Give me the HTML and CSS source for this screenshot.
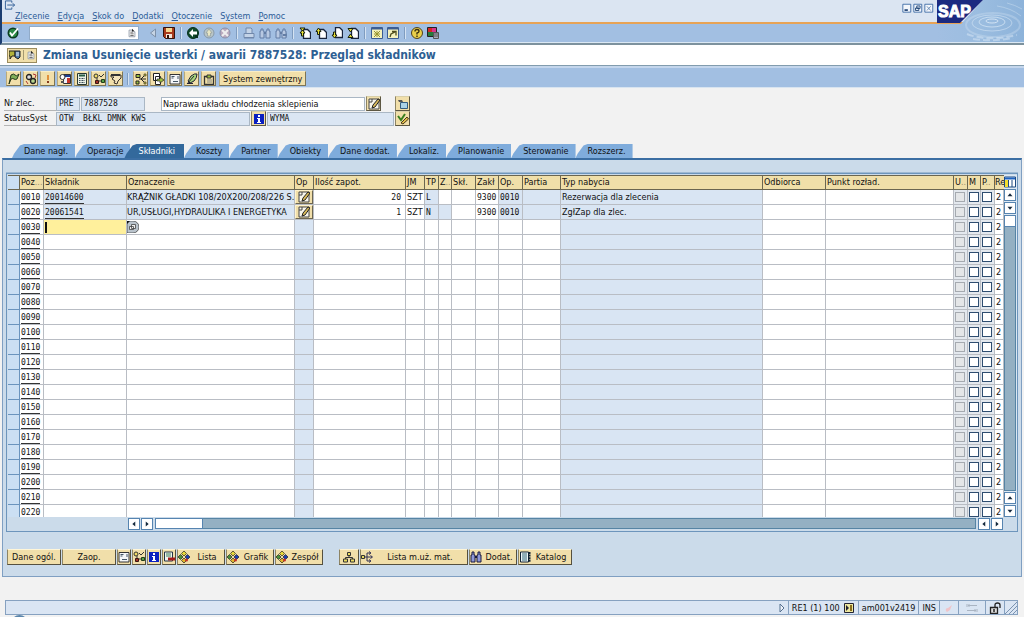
FILE: index.html
```html
<!DOCTYPE html>
<html lang="pl">
<head>
<meta charset="utf-8">
<title>Zmiana Usunięcie usterki / awarii 7887528: Przegląd składników</title>
<link rel="stylesheet" href="styles.css">
</head>
<body>
<svg class="sprite" aria-hidden="true">
  <symbol id="exit" viewBox="0 0 12 12"><path d="M8 3V1H1v9h7V8M3 5.500h8M9 3.500l2 2-2 2" fill="none" stroke="#2c5a94"/></symbol>
  <symbol id="ok" viewBox="0 0 12 12"><circle cx="6" cy="6" r="5.500" fill="#0c3b20"/><circle cx="6" cy="6" r="4" fill="#2b8b45"/><path d="M3 5.500l2 3 6-7" fill="none" stroke="#fff" stroke-width="1.800"/></symbol>
  <symbol id="list" viewBox="0 0 12 12"><path d="M2.500 2.500h4v2h3v6h-7z" fill="#fff" stroke="#8a93a0"/><path d="M4 5h3M4 7h4M4 9h4" stroke="#555"/><path d="M6 1l3 3H6z" fill="#222"/></symbol>
  <symbol id="prev" viewBox="0 0 12 12"><path d="M8.500 2v8l-5-4z" fill="#c6d4e4" stroke="#7d90a8"/></symbol>
  <symbol id="save" viewBox="0 0 12 12"><path d="M.5.500h11v11h-9l-2-2z" fill="#a83a1c" stroke="#32130c"/><path d="M3 1h6v4H3z" fill="#f6d890"/><path d="M3 7h6v4H3z" fill="#f4e5d8"/><path d="M4 8h2v3H4z" fill="#32130c"/></symbol>
  <symbol id="back" viewBox="0 0 12 12"><circle cx="6" cy="6" r="5.500" fill="#0f4a2a" stroke="#08301c"/><path d="M2 6l4-4v2.500h4v3H6V10z" fill="#fff"/><path d="M8 8h3v3H8z" fill="#08301c"/></symbol>
  <symbol id="up" viewBox="0 0 12 12"><circle cx="6" cy="6" r="5" fill="#b9c6c8" stroke="#8798a8"/><path d="M6 2l3 4H7.500v3h-3V6H3z" fill="#e8e6c4" stroke="#8c9694" stroke-width=".6"/></symbol>
  <symbol id="cancel" viewBox="0 0 12 12"><circle cx="6" cy="6" r="5" fill="#b9a9be" stroke="#8990a8"/><path d="M3 3l6 6M9 3L3 9" stroke="#eee" stroke-width="2"/></symbol>
  <symbol id="print" viewBox="0 0 12 12"><path d="M3 6V1h5l1 1v4M1 6.500h10v4H1z" fill="#c3d3e7" stroke="#7088ab"/><path d="M1 11h10" stroke="#7088ab"/></symbol>
  <symbol id="find" viewBox="0 0 12 12"><path d="M2 2h2v2h1v7H1V4h1zM8 2h2v2h1v7H7V4h1z" fill="#b8c9e2" stroke="#637da5"/><path d="M5 6h2" stroke="#637da5" stroke-width="2"/></symbol>
  <symbol id="findnext" viewBox="0 0 12 12"><use href="#find"/><path d="M8 7h3V5l1 3-1 3V9H8z" fill="#637da5"/></symbol>
  <symbol id="first" viewBox="0 0 12 12"><path d="M4.500 2.500h4l3 3v6h-7z" fill="#fff" stroke="#18243c" stroke-width="1.300"/><path d="M1 1h5L3.500 4zM3.500 3L6 6H4.500v3h-2V6H1z" fill="#e8e038" stroke="#17200c"/></symbol>
  <symbol id="pgup" viewBox="0 0 12 12"><path d="M4.500 2.500h4l3 3v6h-7z" fill="#fff" stroke="#18243c" stroke-width="1.300"/><path d="M3.500 1L6 4.500H4.500v3h-2v-3H1z" fill="#e8e038" stroke="#17200c"/></symbol>
  <symbol id="pgdn" viewBox="0 0 12 12"><path d="M4.500.500h4l3 3v7h-7z" fill="#fff" stroke="#18243c" stroke-width="1.300"/><path d="M3.500 11L1 8h1.500V5h2v3H6z" fill="#e8e038" stroke="#17200c"/></symbol>
  <symbol id="last" viewBox="0 0 12 12"><path d="M4.500 1.500h4l3 3v7h-7z" fill="#fff" stroke="#18243c" stroke-width="1.300"/><path d="M1 1.500h5L3.500 5zM1 10.500h5L3.500 7z" fill="#e8e038" stroke="#17200c"/></symbol>
  <symbol id="session" viewBox="0 0 12 12"><path d="M.5.500h11v11H.5z" fill="#f4f1bd" stroke="#3c5c92"/><path d="M1 1.500h10" stroke="#3c5c92" stroke-width="2"/><path d="M3 4l6 6M9 4l-6 6M6 4v6M3 7h6" stroke="#99952d"/></symbol>
  <symbol id="shortcut" viewBox="0 0 12 12"><path d="M.5.500h11v11H.5z" fill="#f4f1bd" stroke="#3c5c92"/><path d="M1 1.500h10" stroke="#3c5c92" stroke-width="2"/><path d="M3 10l1-3 4-2M5 4.500h4v4" fill="none" stroke="#4e4c1c" stroke-width="1.300"/></symbol>
  <symbol id="help" viewBox="0 0 12 12"><circle cx="6" cy="6" r="5.500" fill="#e9cf4a" stroke="#4f4220"/><path d="M4 4.500q0-2 2-2t2 1.700Q8 5.500 6 6v1.500M6 8.500V10" fill="none" stroke="#3a3010" stroke-width="1.400"/></symbol>
  <symbol id="layout" viewBox="0 0 12 12"><path d="M.5.500h9v9h-9z" fill="#277a3c" stroke="#222"/><path d="M1 1h4v4H1z" fill="#d32626"/><path d="M5 1h4v4H5z" fill="#d8328c"/><path d="M6.500 5.500h5v6h-5z" fill="#aab" stroke="#555"/><path d="M7 7h4M7 9h4" stroke="#555"/></symbol>
  <symbol id="order" viewBox="0 0 12 12"><path d="M0 2h6v5H3L1 10V7H0z" fill="#b3b33a" stroke="#222"/><path d="M6 2h5v6l-2 2-3-2z" fill="#4d7aa8" stroke="#222"/><path d="M7 4h3M7 6h3" stroke="#fff"/></symbol>
  <symbol id="flag" viewBox="0 0 12 12"><path d="M1 11L3 2q3-2 4 0t4-1L9 6Q7 7 6 6T3 6z" fill="#7fae58" stroke="#26381c"/></symbol>
  <symbol id="gears" viewBox="0 0 12 12"><circle cx="4" cy="4" r="2.500" fill="#ddd" stroke="#222" stroke-width="1.300"/><circle cx="8" cy="8" r="2.500" fill="#b6d48e" stroke="#222" stroke-width="1.300"/><path d="M8 1l3 1-1 3M1 8l2 3" stroke="#a33" fill="none"/></symbol>
  <symbol id="excl" viewBox="0 0 12 12"><path d="M6 2v5" stroke="#e0913c" stroke-width="2"/><path d="M6 8v2" stroke="#863a1c" stroke-width="2"/></symbol>
  <symbol id="calc" viewBox="0 0 12 12"><path d="M1.500.500h9v11h-9z" fill="#e9efe4" stroke="#283830"/><path d="M3 2.500h6" stroke="#265c42" stroke-width="2"/><path d="M3 5.500h6M3 7.500h6M3 9.500h6" stroke="#394b58" stroke-dasharray="1 .5"/></symbol>
  <symbol id="sched" viewBox="0 0 12 12"><path d="M4.500 1.500h7v9h-7z" fill="#eef2fa" stroke="#333"/><path d="M5 3h6" stroke="#1c3d90" stroke-width="2"/><path d="M8 5h3v5H8z" fill="#c73529"/><circle cx="3.500" cy="4" r="2.500" fill="#fff" stroke="#333"/><path d="M2 8h3v2H2z" fill="#555"/></symbol>
  <symbol id="net" viewBox="0 0 12 12"><circle cx="3" cy="3" r="2" fill="#f0db65" stroke="#333"/><path d="M6 2l2 2 3-3" fill="none" stroke="#333"/><path d="M2.500 7.500h3v3h-3z" fill="#a33129" stroke="#3a1612"/><path d="M8.500 6.500h3v3h-3z" fill="#58a247" stroke="#203d18"/><path d="M4 5v2M6 8h2" stroke="#333"/></symbol>
  <symbol id="hand" viewBox="0 0 12 12"><path d="M1 2h10v3L8 8l-1 3-3-1 1-2-3-2 2-2H1z" fill="#f4e4bd" stroke="#37302a"/><path d="M1 2h9" stroke="#333" stroke-width="2"/></symbol>
  <symbol id="split" viewBox="0 0 12 12"><path d="M1 1.500h4v3H1zM1 8h3v3H1z" fill="#9cbf3e" stroke="#222"/><path d="M4 6h7M6 6l4-4M6 6l4 4" stroke="#222"/><path d="M9 1h2v2H9zM9 9h2v2H9z" fill="#d8cf3a" stroke="#222" stroke-width=".6"/></symbol>
  <symbol id="copy" viewBox="0 0 12 12"><path d="M1.500.500h6v7h-6zM3.500 3.500h5v8h-5z" fill="#fff" stroke="#222"/><path d="M5 6h3V4l4 3-4 3V8H5z" fill="#9cbf3e" stroke="#222" stroke-width=".7"/></symbol>
  <symbol id="doc" viewBox="0 0 12 12"><path d="M1 1.500h10v9.500H1z" fill="#f4f6f8" stroke="#333"/><path d="M2.500 3.500h3M2.500 5h2M4 8.500h5M9 3v3" stroke="#456"/></symbol>
  <symbol id="pen" viewBox="0 0 12 12"><path d="M2 8l3-5q4-3 6-2Q11 5 8 8l-4 2z" fill="#a9d77b" stroke="#223"/><path d="M1 11l7-8" stroke="#223"/><path d="M1 10.500h6" stroke="#223"/></symbol>
  <symbol id="clip" viewBox="0 0 12 12"><path d="M1.500 3.500h9v8h-9z" fill="#f2e1a5" stroke="#333" stroke-width="1.300"/><path d="M4 2h4v3H4z" fill="#9cbf3e" stroke="#333"/><path d="M4 7h5M4 9h5" stroke="#888"/></symbol>
  <symbol id="edit" viewBox="0 0 12 12"><path d="M1 1h10v10H1z" fill="#f8f6ec" stroke="#444"/><path d="M1 4h3V1" stroke="#444" fill="none"/><path d="M4 10l1-3 5-6 2 1-5 7z" fill="#d8b95a" stroke="#222"/></symbol>
  <symbol id="info" viewBox="0 0 12 12"><path d="M1 1h10v10H1z" fill="#0b20c0"/><path d="M5 2h2v2H5zM4 5h3v4h1v1H4V9h1V6H4z" fill="#fff"/></symbol>
  <symbol id="obj" viewBox="0 0 12 12"><path d="M3.500 4.500h7v6h-7z" fill="#a9d1e8" stroke="#335c80"/><path d="M1 2h4l1 2H2z" fill="#555"/></symbol>
  <symbol id="status" viewBox="0 0 12 12"><path d="M1 3l3 4 4-6" fill="none" stroke="#397f1f" stroke-width="2"/><path d="M4 10l6-6 1.500 2L6 11z" fill="#e4bf4c" stroke="#47381a"/></symbol>
  <symbol id="del" viewBox="0 0 12 12"><path d="M1.500 1h8v9h-8z" fill="#eef4f0" stroke="#234"/><path d="M3 3h5M3 5h5" stroke="#3e7f57"/><path d="M5 8h7" stroke="#a41a1a" stroke-width="3"/></symbol>
  <symbol id="balls" viewBox="0 0 12 12"><path d="M6 0l2.500 2.500L6 5 3.500 2.500z" fill="#e8d838" stroke="#222" stroke-width=".7"/><path d="M2.500 3.500L5 6 2.500 8.500 0 6z" fill="#4a8e3b" stroke="#222" stroke-width=".7"/><path d="M9.500 3.500L12 6 9.500 8.500 7 6z" fill="#1c3daf" stroke="#222" stroke-width=".7"/><path d="M6 7l2.500 2.500L6 12 3.500 9.500z" fill="#e0b62c" stroke="#222" stroke-width=".7"/><circle cx="8.500" cy="9" r="1.500" fill="#c43225"/></symbol>
  <symbol id="tree" viewBox="0 0 12 12"><path d="M6 4v3M2.500 8V6.500h7V8" fill="none" stroke="#333"/><path d="M4.500 1.500h3v3h-3zM.5 8h4v3h-4zM7.500 8h4v3h-4z" fill="#eadb60" stroke="#333"/></symbol>
  <symbol id="used" viewBox="0 0 12 12"><path d="M.5 4.500h3v3h-3z" fill="#eadb60" stroke="#333"/><path d="M4 6h7M6 6V2h3M6 6v4h3M8 .5l2 1.500-2 1.500M8 8.500l2 1.500-2 1.500M9.500 4.500l2 1.500-2 1.500" fill="none" stroke="#335"/></symbol>
  <symbol id="binoc" viewBox="0 0 12 12"><path d="M2 1h2v3h1v7H1V4h1zM8 1h2v3h1v7H7V4h1z" fill="#8e97d8" stroke="#1b1b3c"/><path d="M5 6h2" stroke="#1b1b3c" stroke-width="2"/></symbol>
  <symbol id="book" viewBox="0 0 12 12"><path d="M1.500 1h8v10h-8z" fill="#eef6f8" stroke="#123"/><path d="M3 3h5M3 5h5M3 7h5M3 9h5" stroke="#367"/><path d="M10.500 1v10" stroke="#123" stroke-width="2" stroke-dasharray="2 .6"/></symbol>
  <symbol id="config" viewBox="0 0 12 12"><path d="M.5 1h11v10H.5z" fill="#fff" stroke="#1c4a80"/><path d="M1 2.500h10" stroke="#1e63c0" stroke-width="2"/><path d="M1 4h3v7H1z" fill="#f2dc2e"/><path d="M4.500 4v7M8 4v7" stroke="#1c4a80"/></symbol>
  <symbol id="f4" viewBox="0 0 12 12"><path d="M0 0h6a6 6 0 010 12H0z" fill="#b9c3cc" stroke="#333" stroke-width=".7"/><path d="M0 0h3L0 3z" fill="#111"/><path d="M4.500 3.500h4v4h-4zM2.500 5.500h4v3h-4z" fill="#eee" stroke="#444" stroke-width=".8"/></symbol>
  <symbol id="al" viewBox="0 0 12 12"><path d="M7.500 3v6L4 6z" fill="#14283c"/></symbol>
  <symbol id="ar" viewBox="0 0 12 12"><path d="M4.500 3v6L8 6z" fill="#14283c"/></symbol>
  <symbol id="au" viewBox="0 0 12 12"><path d="M3 7.500h6L6 4z" fill="#14283c"/></symbol>
  <symbol id="ad" viewBox="0 0 12 12"><path d="M3 4.500h6L6 8z" fill="#14283c"/></symbol>
  <symbol id="tri" viewBox="0 0 12 12"><path d="M4 2v8l4-4z" fill="#eef3fa" stroke="#55708f"/></symbol>
  <symbol id="sys" viewBox="0 0 12 12"><path d="M1.500 1.500h9v9h-9z" fill="#eee8a0" stroke="#223"/><path d="M3 3l3 3-3 3z" fill="#223"/><path d="M8 3v6" stroke="#8a6f1c" stroke-width="2"/></symbol>
  <symbol id="redpen" viewBox="0 0 12 12"><path d="M3 9q-1-3 2-3l4-3-2 5-3 2z" fill="#f0c4c8"/></symbol>
  <symbol id="swap" viewBox="0 0 12 12"><path d="M1 2v3M2 3.500h9M3 2v3M11 7v3M10 8.500H1M9 7v3" fill="none" stroke="#a9b4c2"/></symbol>
  <symbol id="lock" viewBox="0 0 12 12"><path d="M1.500 5.500h7v6h-7z" fill="#ddd" stroke="#222" stroke-width="1.300"/><path d="M6 5V3q0-2 2.500-2T11 3v3" fill="none" stroke="#222" stroke-width="1.300"/><path d="M5 7v3" stroke="#222" stroke-width="1.500"/></symbol>
  <symbol id="grip" viewBox="0 0 12 12"><path d="M0 12L12 0M4 12l8-8M8 12l4-4" stroke="#7b93b0"/></symbol>
  <symbol id="min" viewBox="0 0 12 12"><path d="M1 1.500h9.500V11H1z" fill="#f2f6fb" stroke="#31629f"/><path d="M3 8.500h4" stroke="#173c70" stroke-width="2"/></symbol>
  <symbol id="max" viewBox="0 0 12 12"><path d="M1 1.500h9.500V11H1z" fill="#f2f6fb" stroke="#31629f"/><path d="M4.500 3.500h4v3h-4zM3 6h4v3H3z" fill="#dce8f4" stroke="#173c70"/></symbol>
  <symbol id="close" viewBox="0 0 12 12"><path d="M1 1.500h9.500V11H1z" fill="#f2f6fb" stroke="#31629f"/><path d="M3.500 4l4.500 5M8 4L3.500 9" stroke="#5b7fae"/></symbol>
</svg>

<header class="top">
  <div class="menu-area">
    <button class="bare session-menu" aria-label="Menu okna"><svg class="ico"><use href="#exit"/></svg></button>
    <nav class="menu">
      <a href="#"><u>Z</u>lecenie</a><a href="#"><u>E</u>dycja</a><a href="#"><u>S</u>kok do</a><a href="#"><u>D</u>odatki</a><a href="#"><u>O</u>toczenie</a><a href="#">S<u>y</u>stem</a><a href="#"><u>P</u>omoc</a>
    </nav>
  </div>
  <div class="toolbar">
    <button class="bare" aria-label="Enter"><svg class="ico"><use href="#ok"/></svg></button>
    <div class="command"><input aria-label="Polecenie"><button class="bare" aria-label="Lista poleceń"><svg class="ico small"><use href="#list"/></svg></button></div>
    <button class="bare" aria-label="Zwiń"><svg class="ico"><use href="#prev"/></svg></button>
    <button class="bare" aria-label="Zapisz"><svg class="ico"><use href="#save"/></svg></button>
    <i class="sep"></i>
    <button class="bare" aria-label="Wstecz"><svg class="ico"><use href="#back"/></svg></button>
    <button class="bare" aria-label="Zakończ"><svg class="ico"><use href="#up"/></svg></button>
    <button class="bare" aria-label="Przerwij"><svg class="ico"><use href="#cancel"/></svg></button>
    <i class="sep"></i>
    <button class="bare" aria-label="Drukuj"><svg class="ico"><use href="#print"/></svg></button>
    <button class="bare" aria-label="Znajdź"><svg class="ico"><use href="#find"/></svg></button>
    <button class="bare" aria-label="Znajdź dalej"><svg class="ico"><use href="#findnext"/></svg></button>
    <i class="sep"></i>
    <button class="bare" aria-label="Pierwsza strona"><svg class="ico"><use href="#first"/></svg></button>
    <button class="bare" aria-label="Poprzednia strona"><svg class="ico"><use href="#pgup"/></svg></button>
    <button class="bare" aria-label="Następna strona"><svg class="ico"><use href="#pgdn"/></svg></button>
    <button class="bare" aria-label="Ostatnia strona"><svg class="ico"><use href="#last"/></svg></button>
    <i class="sep"></i>
    <button class="bare" aria-label="Nowy tryb"><svg class="ico"><use href="#session"/></svg></button>
    <button class="bare" aria-label="Skrót"><svg class="ico"><use href="#shortcut"/></svg></button>
    <i class="sep"></i>
    <button class="bare" aria-label="Pomoc"><svg class="ico"><use href="#help"/></svg></button>
    <button class="bare" aria-label="Układ"><svg class="ico"><use href="#layout"/></svg></button>
  </div>
  <div class="window-buttons">
    <button class="bare" aria-label="Minimalizuj"><svg class="ico small"><use href="#min"/></svg></button>
    <button class="bare" aria-label="Maksymalizuj"><svg class="ico small"><use href="#max"/></svg></button>
    <button class="bare" aria-label="Zamknij"><svg class="ico small"><use href="#close"/></svg></button>
  </div>
  <svg class="brand" viewBox="0 0 87 42" role="img" aria-label="SAP">
    <defs><linearGradient id="water" x1="0" x2="1"><stop offset="0" stop-color="#a2bfe2"/><stop offset=".5" stop-color="#9bbde0"/><stop offset="1" stop-color="#8db3da"/></linearGradient></defs>
    <path d="M0 24h24L46 0h41v42H0z" fill="url(#water)"/>
    <g fill="none" stroke="#d9e8f6"><ellipse cx="55" cy="21" rx="6" ry="2" opacity=".9"/><ellipse cx="55" cy="22" rx="13" ry="5" opacity=".7"/><ellipse cx="55" cy="23" rx="20" ry="8" opacity=".55"/><ellipse cx="56" cy="25" rx="27" ry="12" opacity=".3" stroke-width="2"/><path d="M30 34q20 8 50 1M36 39q20 3 40-1" opacity=".5" stroke-width="2" stroke-dasharray="7 3"/><path d="M60 6q14 2 24 10M70 3q8 2 15 6" opacity=".4"/></g>
    <path d="M0 0h46L23 23H0z" fill="#1c2a80"/>
    <text x="1" y="17" class="brand-text">SAP</text>
  </svg>
</header>

<div class="title-bar">
  <button class="key title-button" aria-label="Usługi dla obiektu"><svg class="ico"><use href="#order"/></svg><i></i><svg class="ico small"><use href="#list"/></svg></button>
  <h1>Zmiana Usunięcie usterki / awarii 7887528: Przegląd składników</h1>
</div>
<div class="app-bar">
  <button class="key" aria-label="Zwolnij"><svg class="ico"><use href="#flag"/></svg></button>
  <button class="key" aria-label="Ustawienia"><svg class="ico"><use href="#gears"/></svg></button>
  <button class="key" aria-label="Uwaga"><svg class="ico"><use href="#excl"/></svg></button>
  <button class="key" aria-label="Terminowanie"><svg class="ico"><use href="#sched"/></svg></button>
  <button class="key" aria-label="Kalkulacja"><svg class="ico"><use href="#calc"/></svg></button>
  <button class="key" aria-label="Dostępność"><svg class="ico"><use href="#net"/></svg></button>
  <button class="key" aria-label="Przekaż"><svg class="ico"><use href="#hand"/></svg></button>
  <i class="sep"></i>
  <button class="key" aria-label="Struktura"><svg class="ico"><use href="#split"/></svg></button>
  <button class="key" aria-label="Przenieś"><svg class="ico"><use href="#copy"/></svg></button>
  <button class="key" aria-label="Dokument"><svg class="ico"><use href="#doc"/></svg></button>
  <button class="key" aria-label="Podpis"><svg class="ico"><use href="#pen"/></svg></button>
  <button class="key" aria-label="Schowek"><svg class="ico"><use href="#clip"/></svg></button>
  <button class="key text-key">System zewnętrzny</button>
</div>

<main>
  <section class="fields">
    <div class="field-row">
      <label for="order-no">Nr zlec.</label>
      <input class="mono type" aria-label="Rodzaj zlecenia" value="PRE" readonly>
      <input class="mono number" id="order-no" value="7887528" readonly>
      <input class="description" aria-label="Opis" value="Naprawa układu chłodzenia sklepienia">
      <button class="key" aria-label="Tekst długi"><svg class="ico"><use href="#edit"/></svg></button>
      <button class="key end-key" aria-label="Obiekt"><svg class="ico"><use href="#obj"/></svg></button>
    </div>
    <div class="field-row">
      <label for="sys-status">StatusSyst</label>
      <input class="mono status" id="sys-status" value="OTW  BŁKL DMNK KWS" readonly>
      <button class="key" aria-label="Informacja"><svg class="ico"><use href="#info"/></svg></button>
      <input class="mono user-status" aria-label="Status użytkownika" value="WYMA" readonly>
      <button class="key" aria-label="Zmień status"><svg class="ico"><use href="#status"/></svg></button>
    </div>
  </section>

  <div class="tabs" role="tablist">
    <button role="tab">Dane nagł.</button><button role="tab">Operacje</button><button role="tab" class="active" aria-selected="true">Składniki</button><button role="tab">Koszty</button><button role="tab">Partner</button><button role="tab">Obiekty</button><button role="tab">Dane dodat.</button><button role="tab">Lokaliz.</button><button role="tab">Planowanie</button><button role="tab">Sterowanie</button><button role="tab">Rozszerz.</button>
  </div>

  <section class="panel">
    <div class="grid-box">
      <div class="grid-main">
        <div class="table-clip">
          <table>
            <colgroup>
              <col class="w12"><col class="w24"><col class="w83"><col class="w168"><col class="w19"><col class="w92"><col class="w19"><col class="w14"><col class="w13"><col class="w24"><col class="w23"><col class="w24"><col class="w38"><col><col class="w63"><col class="w128"><col class="w14"><col class="w13"><col class="w14"><col class="w9">
            </colgroup>
            <thead><tr><th class="sel"></th><th>Poz<span class="faint">...</span></th><th>Składnik</th><th>Oznaczenie</th><th>Op</th><th>Ilość zapot.</th><th>JM</th><th>TP</th><th>Z<span class="faint">...</span></th><th>Skł.</th><th>Zakł</th><th>Op.</th><th>Partia</th><th>Typ nabycia</th><th>Odbiorca</th><th>Punkt rozład.</th><th>U<span class="faint">..</span></th><th>M</th><th>P<span class="faint">..</span></th><th class="tight">Re</th></tr></thead>
            <tbody id="rows"></tbody>
          </table>
        </div>
        <div class="vscroll">
          <button class="config" aria-label="Konfiguracja tabeli"><svg class="ico"><use href="#config"/></svg></button>
          <button class="arrow" aria-label="Do góry"><svg class="ico small"><use href="#au"/></svg></button>
          <button class="arrow" aria-label="W dół"><svg class="ico small"><use href="#ad"/></svg></button>
          <div class="track"><div class="thumb"></div></div>
          <button class="arrow" aria-label="Wiersz w górę"><svg class="ico small"><use href="#au"/></svg></button>
          <button class="arrow" aria-label="Wiersz w dół"><svg class="ico small"><use href="#ad"/></svg></button>
        </div>
      </div>
      <div class="hscroll">
        <button class="arrow" aria-label="W lewo"><svg class="ico small"><use href="#al"/></svg></button>
        <button class="arrow" aria-label="W prawo"><svg class="ico small"><use href="#ar"/></svg></button>
        <div class="track"><div class="thumb"></div></div>
        <button class="arrow" aria-label="Kolumna w lewo"><svg class="ico small"><use href="#al"/></svg></button>
        <button class="arrow" aria-label="Kolumna w prawo"><svg class="ico small"><use href="#ar"/></svg></button>
      </div>
    </div>
    <div class="actions">
      <button class="key b54">Dane ogól.</button>
      <button class="key b54">Zaop.</button>
      <button class="key" aria-label="Szczegóły"><svg class="ico"><use href="#doc"/></svg></button>
      <button class="key" aria-label="Dostępność składników"><svg class="ico"><use href="#net"/></svg></button>
      <button class="key" aria-label="Informacja o składniku"><svg class="ico"><use href="#info"/></svg></button>
      <button class="key" aria-label="Usuń wiersz"><svg class="ico"><use href="#del"/></svg></button>
      <button class="key b48"><svg class="ico"><use href="#balls"/></svg><span>Lista</span></button>
      <button class="key b48"><svg class="ico"><use href="#balls"/></svg><span>Grafik</span></button>
      <button class="key b48"><svg class="ico"><use href="#balls"/></svg><span>Zespół</span></button>
      <button class="key b20" aria-label="Struktura"><svg class="ico"><use href="#tree"/></svg></button>
      <button class="key b108"><svg class="ico"><use href="#used"/></svg><span>Lista m.uż. mat.</span></button>
      <button class="key b48"><svg class="ico"><use href="#binoc"/></svg><span>Dodat.</span></button>
      <button class="key b54"><svg class="ico"><use href="#book"/></svg><span>Katalog</span></button>
    </div>
  </section>
</main>

<footer class="status-bar">
  <svg class="ico"><use href="#tri"/></svg>
  <span class="cell">RE1 (1) 100 <svg class="ico"><use href="#sys"/></svg></span>
  <span class="cell">am001v2419</span>
  <span class="cell">INS</span>
  <span class="cell"><svg class="ico"><use href="#redpen"/></svg></span>
  <span class="cell wide"><svg class="ico"><use href="#swap"/></svg></span>
  <span class="cell"><svg class="ico"><use href="#lock"/></svg></span>
  <span class="cell grip"><svg class="ico"><use href="#grip"/></svg></span>
</footer>
<div class="orb-clip"><i class="orb"></i></div>
<script src="rows.js"></script>
</body>
</html>
```
FILE: styles.css
```css
* { box-sizing: border-box; }
body {
  margin: 0;
  min-height: 100vh;
  display: flex;
  flex-direction: column;
  background: #f2f2f2;
  color: #111;
  font-family: "DejaVu Sans Condensed", "DejaVu Sans", sans-serif;
  font-size: 9px;
  line-height: 12px;
  overflow: hidden;
}
button, input { font: inherit; color: inherit; margin: 0; padding: 0; border-radius: 0; }
button { white-space: nowrap; }
input { min-width: 0; outline: none; }
.sprite { position: absolute; width: 0; height: 0; }
.ico { width: 12px; height: 12px; display: block; flex: none; }
.ico.small { width: 10px; height: 10px; }
.bare { border: 0; background: none; display: block; }
.mono, .m { font-family: "DejaVu Sans Mono", monospace; font-size: 8px; }

.top { position: relative; border-left: 2px solid #1b3d70; border-bottom: 2px solid #7d929e; background: #a2bfe2; }
.menu-area { height: 24px; padding-left: 2px; background: #dbe5f2; border-bottom: 2px solid #e8a355; }
.menu { display: flex; gap: 8px; padding-left: 11px; margin-top: -1px; }
.menu a { color: #2b5c98; text-decoration: none; }
.menu u { text-decoration: underline; text-underline-offset: 1px; }
.session-menu .ico { height: 11px; }
.toolbar { height: 19px; display: flex; align-items: center; gap: 4px; padding-left: 5px; border-bottom: 1px solid #dbe8f4; }
.command { display: flex; align-items: center; width: 110px; height: 14px; margin: 0 4px 0 6px; padding-right: 1px; background: #fff; border: 1px solid #91abc8; }
.command input { flex: 1; border: 0; background: none; }
.sep { flex: none; width: 2px; height: 12px; border-left: 1px solid #7f9cbf; border-right: 1px solid #d5e3f2; }
.toolbar .sep { margin: 0 1px; }
.window-buttons { position: absolute; top: 3px; right: 90px; display: flex; gap: 1px; }
.brand { position: absolute; top: 0; right: 0; width: 87px; height: 42px; }
.brand-text { font: bold 16px "Liberation Sans", Arial, sans-serif; fill: #fff; stroke: #fff; stroke-width: 1px; }

.title-bar { height: 21px; display: flex; align-items: center; gap: 6px; padding-left: 7px; background: #fff; border-bottom: 1px solid #829cae; }
h1 { margin: 0; font-size: 12px; line-height: 16px; font-weight: bold; color: #2e6093; white-space: nowrap; }
.key {
  flex: none; display: flex; align-items: center; justify-content: center;
  min-width: 15px; height: 15px; background: #f1dfaa;
  border: 1px solid #fff3cd; border-right-color: #6d6650; border-bottom-color: #6d6650;
}
.key span { flex: 1; text-align: center; }
.title-button { width: 30px; gap: 2px; border: 1px solid #9b8c5e; }
.title-button i { width: 1px; height: 10px; background: #a59970; }
.app-bar { height: 22px; display: flex; align-items: center; gap: 2px; padding: 2px 0 0 6px; background: #a2bfe2; border-top: 2px solid #c4d6ec; border-bottom: 1px solid #d8e4f0; }
.app-bar .key { border-color: #f9edc6 #7d7454 #7d7454 #b8aa7c; }
.app-bar .sep { margin: 0 2px; }
.app-bar .text-key { padding: 0 3px; margin-left: 1px; }

.fields { padding: 8px 4px 0; }
.field-row { display: flex; align-items: center; height: 15px; }
.field-row label { width: 52px; line-height: 13px; border-bottom: 1px solid #b5b5b5; }
.field-row input { height: 14px; padding: 0 2px; border: 1px solid #aab7c4; background: #dbe6f3; margin-right: 1px; }
.field-row .type { width: 24px; }
.field-row .number { width: 64px; }
.field-row .description { width: 204px; margin-left: 15px; padding: 0 1px; background: #fff; }
.field-row .end-key { margin-left: 14px; }
.field-row .status { width: 194px; }
.field-row .user-status { width: 127px; margin-left: 1px; }
.field-row .key { border-color: #d9cfa8 #5d5742 #5d5742 #8d8464; }

.tabs { display: flex; height: 14px; margin-top: 18px; padding-left: 12px; }
.tabs button { border: 0; height: 14px; padding: 0 7px 0 12px; background: #7facdc; clip-path: polygon(0 100%, 2px 70%, 8px 10%, 12px 0, 100% 0, 100% 100%); }
.tabs .active { background: #33699c; color: #fff; margin-left: -6px; padding-left: 14px; padding-right: 9px; }
.panel { margin: 0 2px; padding: 13px 3px 11px; background: #cbdbea; border: 1px solid #7f9fc2; border-top: 2px solid #3b6ea3; }

.grid-box { padding: 1px 0 1px 1px; border: 1px solid #6d95bc; box-shadow: 0 -1px #9fb9d2; }
.grid-main { display: flex; height: 342px; }
.table-clip { flex: 1; min-width: 0; overflow: hidden; }
table { width: 100%; table-layout: fixed; border-collapse: separate; border-spacing: 0; }
.w9 { width: 9px; } .w12 { width: 12px; } .w13 { width: 13px; } .w14 { width: 14px; } .w19 { width: 19px; }
.w23 { width: 23px; } .w24 { width: 24px; } .w38 { width: 38px; } .w63 { width: 63px; } .w83 { width: 83px; }
.w92 { width: 92px; } .w128 { width: 128px; } .w168 { width: 168px; }
th, td { height: 15px; padding: 0 0 0 1px; overflow: hidden; white-space: nowrap; text-align: left; line-height: 13px; }
th { font-weight: normal; background: #f0dfa9; border: 1px solid #6b6650; border-left: 0; }
th .faint { color: #9b9070; }
th.tight { padding: 0; border-right: 0; }
td { background: #fff; border-right: 1px solid #b9bdc4; border-bottom: 1px solid #b9bdc4; }
th.sel { background: #cbdff3; }
td.sel { background: #cbdff3; border-color: #6b94bd; }
td.blue { background: #d9e5f3; }
td.name { padding: 0; }
td.boxed { background: #e3e8ee; padding: 0; }
td.focus { background: #fff09c; }
td a { color: #111; border-bottom: 1px solid #333; text-decoration: none; display: inline-block; line-height: 10px; }
td.hit { padding: 0; }
td .key { width: 18px; height: 14px; }
td input:not([type=checkbox]) { display: block; width: 100%; height: 13px; border: 0; background: none; }
td .right { text-align: right; padding-right: 4px; }
td.focus input { border-left: 2px solid #111; height: 11px; }
input[type=checkbox] { appearance: none; display: block; width: 10px; height: 10px; margin: 1px; background: #fff; border: 1px solid #2e4d70; }
input[type=checkbox]:disabled { background: #e4e6e8; border-color: #a5aab0; }

.vscroll { width: 13px; display: flex; flex-direction: column; gap: 1px; background: #dce8f3; }
.config { width: 13px; height: 13px; border: 0; background: none; }
.arrow { flex: none; display: flex; align-items: center; justify-content: center; width: 12px; height: 12px; background: #fff; border: 1px solid #5684b0; }
.track { flex: 1; background: #94b0c3; border: 1px solid #5684a4; }
.vscroll .track { width: 12px; }
.thumb { background: #fff; border: 1px solid #5684b0; }
.vscroll .thumb { height: 12px; margin: -1px; }
.hscroll { display: flex; align-items: center; gap: 1px; height: 13px; padding: 0 14px 0 120px; }
.hscroll .track { height: 11px; margin: 0 1px; }
.hscroll .thumb { width: 48px; height: 11px; margin: -1px; }
.actions { display: flex; gap: 1px; padding: 17px 0 0 1px; }
.actions .key { border-color: #fff6d8 #55503f #55503f #8d8464; height: 16px; min-width: 14px; }
.actions .b20 { width: 20px; margin-left: 15px; }
.actions .b48 { width: 48px; }
.actions .b54 { width: 54px; }
.actions .b108 { width: 108px; }

.status-bar { display: flex; align-items: center; justify-content: flex-end; height: 15px; margin: 23px 6px 0 5px; background: #dae5f3; border: 1px solid #86a1c0; }
.cell { display: flex; align-items: center; gap: 3px; height: 13px; padding: 0 3px; border-left: 1px solid #86a1c0; }
.cell.wide { padding: 0 7px; }
.cell.grip { padding: 0; }
.orb-clip { height: 2px; margin-left: 11px; overflow: hidden; }
.orb { display: block; width: 17px; height: 17px; border: 2px solid #5b86ac; border-radius: 50%; }
```
FILE: rows.js
```javascript
const items = [
  { part: "20014600", name: "KRĄŻNIK GŁADKI 108/20X200/208/226 S..", qty: "20", unit: "SZT", tp: "L", plant: "9300", op: "0010", type: "Rezerwacja dla zlecenia" },
  { part: "20061541", name: "UR,USŁUGI,HYDRAULIKA I ENERGETYKA", qty: "1", unit: "SZT", tp: "N", plant: "9300", op: "0010", type: "ZgłZap dla zlec." }
];
const cell = (html = "", cls = "") => `<td class="${cls}">${html}</td>`;
const check = (label, off) => cell(`<input type="checkbox" aria-label="${label}"${off ? " disabled" : ""}>`, "boxed");

let html = "";
for (let i = 0; i < 22; i++) {
  const pos = String((i + 1) * 10).padStart(4, "0");
  const d = items[i];
  html += "<tr>" + cell("", "sel") + cell(`<a href="#">${pos}</a>`, "m");
  if (d) {
    html += cell(`<a href="#">${d.part}</a>`, "m blue")
      + cell(d.name, "blue name")
      + cell('<button class="key" aria-label="Tekst"><svg class="ico"><use href="#edit"/></svg></button>', "hit")
      + cell(`<input class="right m" aria-label="Ilość ${pos}" value="${d.qty}">`)
      + cell(`<input aria-label="Jednostka ${pos}" value="${d.unit}">`)
      + cell(d.tp, "m blue") + cell("", i ? "blue" : "") + cell()
      + cell(`<input class="m" aria-label="Zakład ${pos}" value="${d.plant}">`)
      + cell(d.op, "m blue") + cell("", "blue") + cell(d.type, "blue");
  } else {
    html += (i === 2
      ? cell(`<input class="m" aria-label="Składnik ${pos}">`, "focus")
        + cell('<button class="bare" aria-label="Wyszukaj"><svg class="ico"><use href="#f4"/></svg></button>', "hit")
      : cell() + cell())
      + cell("", "blue") + cell().repeat(8) + cell("", "blue");
  }
  html += cell() + cell() + check("U " + pos, true) + check("M " + pos) + check("P " + pos) + cell("2") + "</tr>";
}
document.getElementById("rows").innerHTML = html;
```
